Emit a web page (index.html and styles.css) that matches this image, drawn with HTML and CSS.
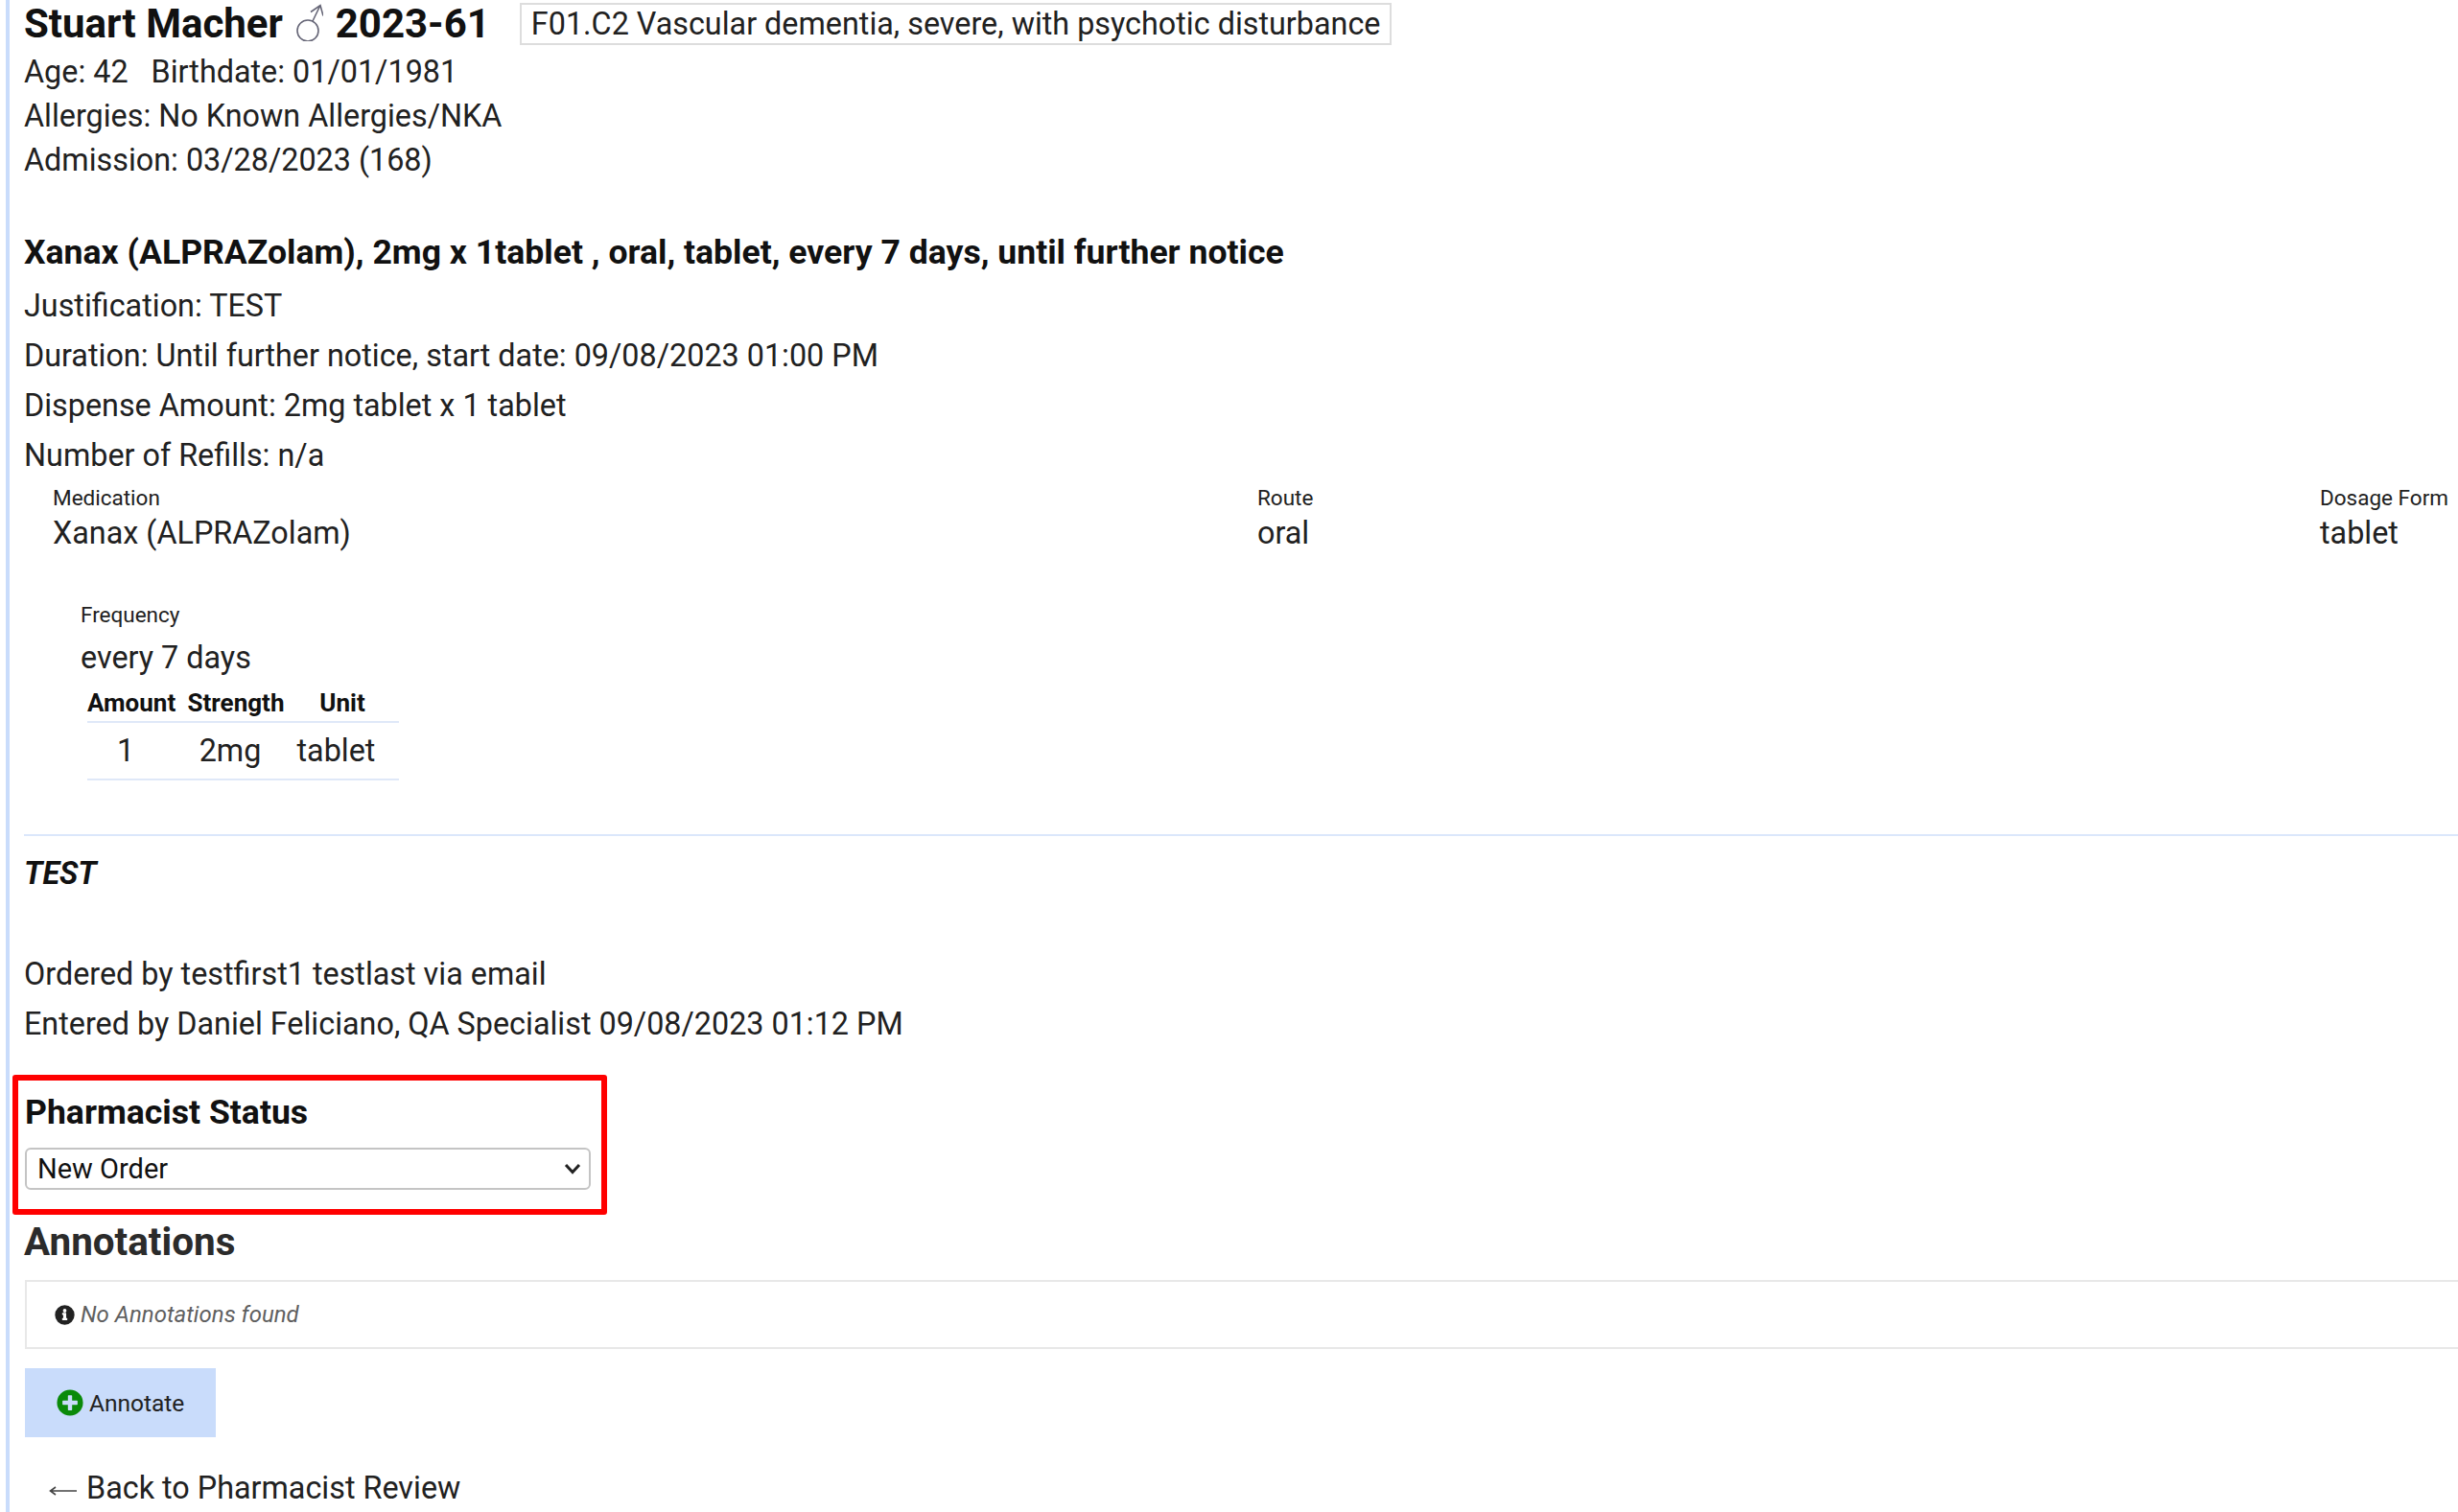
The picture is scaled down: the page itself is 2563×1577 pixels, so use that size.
FILE: index.html
```html
<!DOCTYPE html>
<html lang="en">

<head>
    <meta charset="UTF-8">
    <meta name="viewport" content="width=device-width, initial-scale=1.0">
    <title>Pharmacist Review</title>

    <link rel="stylesheet" href="styles.css">
</head>

<body>
    <main class="page">
        <div class="patient-head">
            <h1 class="patient-name">Stuart Macher
                <svg class="icon-male" viewBox="0 0 30 40" aria-hidden="true">
                    <circle cx="14" cy="29" r="11" />
                    <path d="M19 19 L27 2.5 M17 9.5 L27 2.5 L30 13.5" />
                </svg>
                2023-61</h1>
            <span class="diagnosis">F01.C2 Vascular dementia, severe, with psychotic disturbance</span>
        </div>
        <div class="patient-info">
            <div>Age: 42 <span class="gap">Birthdate: 01/01/1981</span></div>
            <div>Allergies: No Known Allergies/NKA</div>
            <div>Admission: 03/28/2023 (168)</div>
        </div>

        <h2 class="order-title">Xanax (ALPRAZolam), 2mg x 1tablet , oral, tablet, every 7 days, until further notice</h2>
        <div class="order-info">
            <div>Justification: TEST</div>
            <div>Duration: Until further notice, start date: 09/08/2023 01:00 PM</div>
            <div>Dispense Amount: 2mg tablet x 1 tablet</div>
            <div>Number of Refills: n/a</div>
        </div>

        <div class="med-row">
            <div>
                <div class="lbl">Medication</div>
                <div class="val">Xanax (ALPRAZolam)</div>
            </div>
            <div>
                <div class="lbl">Route</div>
                <div class="val">oral</div>
            </div>
            <div>
                <div class="lbl">Dosage Form</div>
                <div class="val">tablet</div>
            </div>
        </div>

        <div class="freq">
            <div class="lbl">Frequency</div>
            <div class="val">every 7 days</div>
            <table class="dose">
                <thead>
                    <tr>
                        <th>Amount</th>
                        <th>Strength</th>
                        <th>Unit</th>
                    </tr>
                </thead>
                <tbody>
                    <tr>
                        <td>1</td>
                        <td>2mg</td>
                        <td>tablet</td>
                    </tr>
                </tbody>
            </table>
        </div>

        <hr class="rule">

        <div class="note">TEST</div>

        <div class="ordered">
            <div>Ordered by testfirst1 testlast via email</div>
            <div>Entered by Daniel Feliciano, QA Specialist 09/08/2023 01:12 PM</div>
        </div>

        <div class="status-box">
            <div class="status-title">Pharmacist Status</div>
            <div class="select-wrap">
                <select class="status-select">
                    <option>New Order</option>
                </select>
                <svg class="select-arrow" viewBox="0 0 18 12" aria-hidden="true">
                    <path d="M2 2 L9 9.5 L16 2" />
                </svg>
            </div>
        </div>

        <h3 class="annot-title">Annotations</h3>
        <div class="annot-box">
            <svg class="icon-info" viewBox="0 0 512 512" aria-hidden="true">
                <path fill-rule="evenodd" d="M256 8a248 248 0 1 0 0 496 248 248 0 0 0 0-496zM256 100a46 46 0 1 1 0 92 46 46 0 0 1 0-92zM322 376c0 7-5 12-12 12H202c-7 0-12-5-12-12v-30c0-7 5-12 12-12h16v-76h-16c-7 0-12-5-12-12v-30c0-7 5-12 12-12h80c7 0 12 5 12 12v118h16c7 0 12 5 12 12z" />
            </svg>
            <em>No Annotations found</em>
        </div>

        <button class="annotate-btn" type="button">
            <svg class="icon-plus" viewBox="0 0 512 512" aria-hidden="true">
                <path fill-rule="evenodd" d="M256 8a248 248 0 1 0 0 496 248 248 0 0 0 0-496zM400 284c0 7-5 12-12 12h-92v92c0 7-5 12-12 12h-56c-7 0-12-5-12-12v-92h-92c-7 0-12-5-12-12v-56c0-7 5-12 12-12h92v-92c0-7 5-12 12-12h56c7 0 12 5 12 12v92h92c7 0 12 5 12 12z" />
            </svg>
            Annotate
        </button>

        <a class="back-link" href="#">
            <svg class="icon-back" viewBox="0 0 30 12" aria-hidden="true">
                <path d="M29 6 H2 M7 2 L1.5 6 L7 10" />
            </svg>
            Back to Pharmacist Review
        </a>
    </main>
</body>

</html>
```

FILE: styles.css
```css
html,
body {
    margin: 0;
    padding: 0;
    background: #fff;
}

body {
    font-family: Roboto, sans-serif;
    font-size: 32.35px;
    color: #212121;
    overflow: hidden;
    height: 1577px;
}

.page {
    border-left: 4px solid #c9dcfb;
    margin-left: 6px;
    padding-left: 15px;
    min-height: 1577px;
    box-sizing: border-box;
}

/* cabecera paciente */
.patient-head {
    display: flex;
    align-items: flex-start;
    gap: 31px;
    height: 52px;
}

.patient-name {
    margin: 0;
    font-size: 42px;
    font-weight: 700;
    color: #111;
    line-height: 50px;
    white-space: nowrap;
}

.icon-male {
    width: 30px;
    height: 40px;
    margin: 0 2px;
    vertical-align: -4px;
    fill: none;
    stroke: #667;
    stroke-width: 1.6;
}

.diagnosis {
    border: 2px solid #ddd;
    padding: 0 10px;
    line-height: 40px;
    margin-top: 3px;
    white-space: nowrap;
}

.patient-info {
    line-height: 46px;
}

.gap {
    margin-left: 16px;
}

.order-title {
    margin: 48px 0 0;
    font-size: 35.6px;
    font-weight: 700;
    color: #111;
    line-height: 50px;
}

.order-info {
    margin-top: 5px;
    line-height: 52px;
}

/* medicacion */
.med-row {
    display: grid;
    grid-template-columns: 1256px 1108px auto;
    margin-top: 3px;
    padding-left: 30px;
    white-space: nowrap;
}

.lbl {
    font-size: 22.5px;
    line-height: 31px;
}

.val {
    line-height: 42px;
}

.freq {
    margin-top: 49px;
    padding-left: 59px;
}

.freq .val {
    line-height: 58px;
}

.dose {
    border-collapse: collapse;
    table-layout: fixed;
    width: 325px;
    margin: 0 0 0 7px;
}

.dose th {
    font-size: 26px;
    font-weight: 700;
    padding: 0 0 1px;
    border-bottom: 2px solid #dfe8f8;
    color: #111;
    line-height: 36px;
}

.dose td {
    text-align: center;
    line-height: 58px;
    padding: 0 12px 0 0;
    border-bottom: 2px solid #dfe8f8;
}

.dose th:nth-child(1) {
    width: 92px;
}

.dose th:nth-child(2) {
    width: 126px;
}

.dose th:nth-child(3) {
    padding-right: 11px;
}

.dose td:nth-child(3) {
    padding-right: 24px;
}

.rule {
    border: 0;
    border-top: 2px solid #dbe7fb;
    margin: 56px 0 0;
}

.note {
    margin-top: 16px;
    font-weight: 700;
    font-style: italic;
    color: #111;
    line-height: 46px;
}

.ordered {
    margin-top: 56px;
    line-height: 52px;
}

/* estado */
.status-box {
    width: 620px;
    box-sizing: border-box;
    margin: 27px 0 0 -12px;
    border: 6px solid #f00;
    border-radius: 3px;
    padding: 0 0 0 7px;
    height: 146px;
}

.status-title {
    font-size: 35.6px;
    font-weight: 700;
    color: #111;
    line-height: 44px;
    margin-top: 11px;
}

.select-wrap {
    position: relative;
    width: 590px;
    margin-top: 15px;
}

.status-select {
    display: block;
    width: 100%;
    height: 44px;
    appearance: none;
    background: #fff;
    border: 2px solid #c4c4c4;
    border-radius: 6px;
    padding: 0 11px;
    font: 29px Roboto, sans-serif;
    color: #111;
}

.select-arrow {
    position: absolute;
    right: 10px;
    top: 16px;
    width: 18px;
    height: 12px;
    fill: none;
    stroke: #222;
    stroke-width: 3;
}

.annot-title {
    margin: 3px 0 0;
    font-size: 40.4px;
    font-weight: 700;
    line-height: 52px;
    color: #2b2b2b;
}

.annot-box {
    margin: 13px 0 0 1px;
    height: 72px;
    box-sizing: border-box;
    border: 2px solid #e8e8e8;
    border-right: 0;
    display: flex;
    align-items: center;
    padding-left: 29px;
    gap: 6px;
    font-size: 24px;
    color: #5f5f5f;
}

.icon-info {
    width: 21px;
    height: 21px;
    fill: #222;
}

.annotate-btn {
    display: flex;
    align-items: center;
    gap: 6px;
    margin: 20px 0 0 1px;
    width: 199px;
    height: 72px;
    border: 0;
    background: #c9dcfb;
    padding: 0 0 0 33px;
    font: 24.5px Roboto, sans-serif;
    color: #222;
}

.icon-plus {
    width: 28px;
    height: 28px;
    fill: #0a8a0a;
}

.back-link {
    display: flex;
    align-items: center;
    gap: 9px;
    margin: 30px 0 0 26px;
    line-height: 46px;
    color: #212121;
    text-decoration: none;
}

.icon-back {
    width: 30px;
    height: 12px;
    margin-top: 6px;
    fill: none;
    stroke: #444;
    stroke-width: 1.6;
}
```
